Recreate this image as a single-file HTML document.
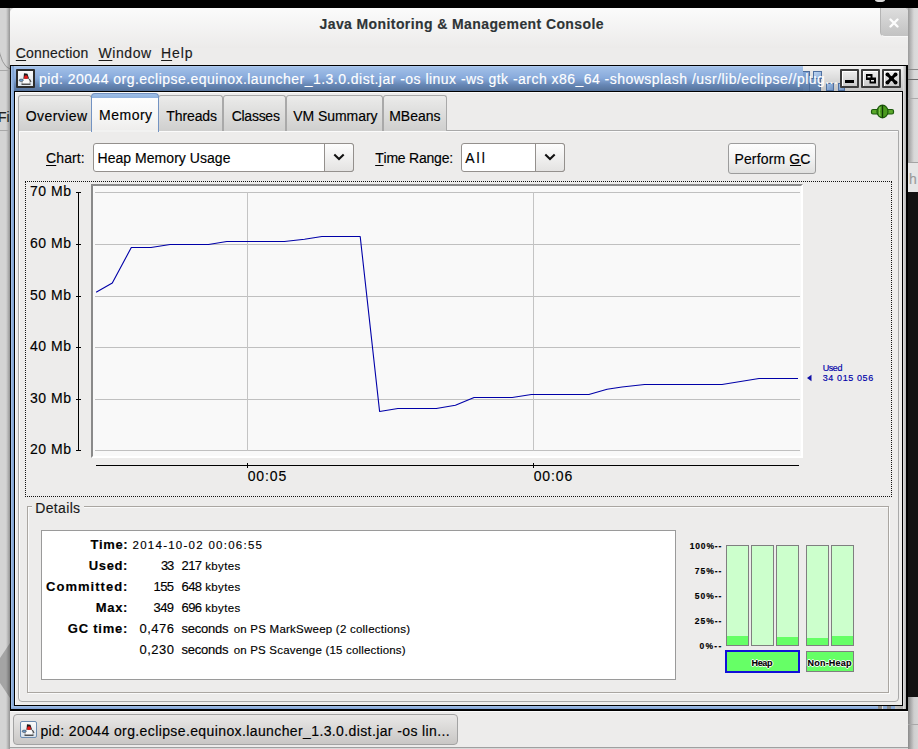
<!DOCTYPE html><html><head><meta charset="utf-8"><style>
html,body{margin:0;padding:0;width:918px;height:749px;overflow:hidden;background:#edeceb}
.r{position:absolute;box-sizing:border-box}
.t{position:absolute;white-space:nowrap;line-height:20px;font-family:"Liberation Sans",sans-serif;font-variant-ligatures:none;font-kerning:none;-webkit-text-stroke:0.15px currentColor}
u{text-decoration:underline;text-underline-offset:2px}
</style></head><body>
<div class="r" style="left:0px;top:0px;width:918px;height:749px;background:#edeceb"></div>
<div class="r" style="left:0px;top:0px;width:10px;height:749px;background:#d4d4d4"></div>
<svg class="r" style="left:0;top:0" width="10" height="749"><path d="M0 658 L10 643 L10 698 L0 683 Z" fill="#a4a4a4"/><path d="M-2 44 Q1 66 10 69" stroke="#9a9a9a" stroke-width="1" fill="none"/><rect x="0" y="0" width="10" height="749" fill="url(#lg)"/><defs><linearGradient id="lg" x1="0" x2="1" y1="0" y2="0"><stop offset="0" stop-color="#000" stop-opacity="0"/><stop offset="0.6" stop-color="#000" stop-opacity="0"/><stop offset="1" stop-color="#000" stop-opacity="0.3"/></linearGradient></defs></svg>
<div class="r" style="left:0px;top:0px;width:918px;height:8px;background:#000"></div>
<svg class="r" style="left:870px;top:0" width="20" height="4"><ellipse cx="10" cy="0" rx="5" ry="2" fill="#d8d8d8"/></svg>
<div class="r" style="left:908px;top:8px;width:10px;height:154px;background:linear-gradient(to right,#9a9a9a,#d8d8d8 60%,#dcdcdc)"></div>
<div class="r" style="left:908px;top:162px;width:10px;height:30px;background:#e6e6e6;border-top:1px solid #a4a4a4"></div>
<div class="r" style="left:908px;top:192px;width:10px;height:505px;background:#121212"></div>
<div class="r" style="left:908px;top:697px;width:10px;height:52px;background:linear-gradient(to right,#8a8a8a,#cfcfcf 60%,#d6d6d6)"></div>
<div class="r" style="left:908px;top:724px;width:10px;height:1px;background:#a8a8a8"></div>
<div class="r" style="left:908px;top:69px;width:10px;height:1px;background:#888"></div>
<div class="r" style="left:908px;top:79px;width:10px;height:1px;background:#6a6a6a"></div>
<div class="r" style="left:908px;top:98px;width:10px;height:1px;background:#aaa"></div>
<div class="r" style="left:10px;top:8px;width:6px;height:6px;background:#cfcfcf"></div>
<div class="r" style="left:902px;top:8px;width:6px;height:6px;background:#bdbdbd"></div>
<div class="r" style="left:10px;top:8px;width:898px;height:741px;background:#edeceb;border-radius:5px 5px 0 0"></div>
<div class="r" style="left:10px;top:8px;width:898px;height:40px;background:linear-gradient(to bottom,#fbfbfb,#ecebea);border-radius:5px 5px 0 0"></div>
<div class="r" style="left:880px;top:8px;width:28px;height:29px;background:linear-gradient(to bottom,#dedede,#c2c2c2);border-radius:0 4px 0 5px;border-left:1px solid #b4b4b4;border-bottom:1px solid #f8f8f8"></div>
<svg class="r" style="left:888px;top:17px" width="12" height="12"><path d="M2.5 2.5 L9.5 9.5 M9.5 2.5 L2.5 9.5" stroke="#fdfdfd" stroke-width="2.4" stroke-linecap="round"/></svg>
<div class="t" style="left:15.80px;top:43.15px;font-size:14px;letter-spacing:0.183px;font-weight:normal;color:#1a1a1a;"><u>C</u>onnection</div>
<div class="t" style="left:98.60px;top:43.15px;font-size:14px;letter-spacing:0.550px;font-weight:normal;color:#1a1a1a;"><u>W</u>indow</div>
<div class="t" style="left:161.10px;top:43.15px;font-size:14px;letter-spacing:0.900px;font-weight:normal;color:#1a1a1a;"><u>H</u>elp</div>
<div class="t" style="left:319.50px;top:14.15px;font-size:14px;letter-spacing:0.403px;font-weight:bold;color:#2e3436;">Java Monitoring &amp; Management Console</div>
<div class="r" style="left:10px;top:65px;width:898px;height:646px;background:#000"></div>
<div class="r" style="left:11px;top:66px;width:895px;height:25px;background:linear-gradient(to bottom,#bad2f2 0px,#a2c0e8 1px,#88aadb 12px,#6686b4 19px,#55729a 25px)"></div>
<div class="r" style="left:803px;top:66px;width:103px;height:25px;background:linear-gradient(to bottom,#f2f2f2,#dcdcdc 50%,#c4c4c4)"></div>
<div class="r" style="left:803px;top:71px;width:7px;height:20px;background:linear-gradient(to bottom,#86a8d8,#5b7aa3);box-shadow:inset -1px 1px 0 #4d6d9a"></div>
<div class="r" style="left:810px;top:78px;width:11px;height:13px;background:linear-gradient(to bottom,#7b9dcb,#5b7aa3);box-shadow:inset -1px 1px 0 #4d6d9a"></div>
<div class="r" style="left:813px;top:71px;width:9px;height:8px;background:linear-gradient(135deg,#c4daf4,#88aad8);box-shadow:inset 0 0 0 1px #4f70a0"></div>
<div class="r" style="left:826px;top:83px;width:8px;height:8px;background:linear-gradient(135deg,#a8c4e8,#6a8cbc);box-shadow:inset 0 0 0 1px #4f70a0"></div>
<div class="r" style="left:838px;top:83px;width:7px;height:8px;background:linear-gradient(135deg,#a8c4e8,#6a8cbc);box-shadow:inset 0 0 0 1px #4f70a0"></div>
<div class="r" style="left:11px;top:66px;width:3px;height:643px;background:linear-gradient(to right,#b4cdef,#8fb0dc 1px,#7fa2d2)"></div>
<div class="r" style="left:11px;top:706px;width:867px;height:3px;background:linear-gradient(to bottom,#a4c2ea,#7c9ed0)"></div>
<div class="r" style="left:878px;top:706px;width:28px;height:3px;background:linear-gradient(to right,#e6e6e6,#a8a8a8)"></div>
<div class="r" style="left:878px;top:706px;width:4px;height:3px;background:#8a8a8a"></div>
<div class="r" style="left:883px;top:706px;width:4px;height:3px;background:#8aaad6"></div>
<div class="r" style="left:887px;top:706px;width:4px;height:3px;background:#8a8a8a"></div>
<div class="r" style="left:891px;top:706px;width:4px;height:3px;background:#8aaad6"></div>
<div class="r" style="left:903px;top:66px;width:3px;height:643px;background:linear-gradient(to right,#e4e4e4,#b0b0b0)"></div>
<div class="r" style="left:15px;top:92px;width:887px;height:613px;background:#edeceb;border-left:1px solid #fafafa;border-top:1px solid #fafafa;box-sizing:border-box"></div>
<div class="t" style="left:38.90px;top:69.15px;font-size:14px;letter-spacing:0.470px;font-weight:normal;color:#fff;">pid: 20044 org.eclipse.equinox.launcher_1.3.0.dist.jar -os linux -ws gtk -arch x86_64 -showsplash /usr/lib/eclipse//plug...</div>
<div class="r" style="left:16px;top:69px;width:19px;height:19px;background:#2c2c2c;border-radius:1px"></div>
<div class="r" style="left:18px;top:71px;width:15px;height:15px;background:linear-gradient(#fafafa,#dde6ee)"></div>
<svg class="r" style="left:18px;top:71px" width="15" height="15"><path d="M5.5 7 Q3.5 11 4 13 L12 13 Q12.5 10 10.5 7 Z" fill="#fbfbfb" stroke="#777" stroke-width="0.6"/><path d="M6 2.2 L9.5 2.8 L11 7.5 L5.5 7.5 Z" fill="#1a1a1a"/><circle cx="8" cy="6.2" r="1.9" fill="#e41b1b"/><ellipse cx="3.2" cy="9.3" rx="2" ry="1.2" fill="#6d9ccc" stroke="#333" stroke-width="0.5"/><path d="M11.5 8 L13 11" stroke="#333" stroke-width="1"/><path d="M3.5 13.3 H12.5" stroke="#444" stroke-width="1.2"/></svg>
<div class="r" style="left:840px;top:69px;width:19px;height:19px;background:#3c3c3c;border-radius:1px"></div>
<div class="r" style="left:842px;top:71px;width:15px;height:15px;background:linear-gradient(#ececec,#c9c9c9);border-top:1px solid #fff;border-left:1px solid #fff;box-sizing:border-box"></div>
<svg class="r" style="left:840px;top:69px" width="19" height="19"><rect x="5" y="11" width="9" height="3" fill="#000"/></svg>
<div class="r" style="left:861px;top:69px;width:19px;height:19px;background:#3c3c3c;border-radius:1px"></div>
<div class="r" style="left:863px;top:71px;width:15px;height:15px;background:linear-gradient(#ececec,#c9c9c9);border-top:1px solid #fff;border-left:1px solid #fff;box-sizing:border-box"></div>
<svg class="r" style="left:861px;top:69px" width="19" height="19"><rect x="5" y="5" width="6.5" height="6" fill="#000"/><rect x="8.5" y="8.5" width="6.5" height="6" fill="#000"/><rect x="6.5" y="7" width="3" height="1.5" fill="#e8e8e8"/><rect x="10" y="11" width="3" height="1.5" fill="#e8e8e8"/></svg>
<div class="r" style="left:882px;top:69px;width:19px;height:19px;background:#3c3c3c;border-radius:1px"></div>
<div class="r" style="left:884px;top:71px;width:15px;height:15px;background:linear-gradient(#ececec,#c9c9c9);border-top:1px solid #fff;border-left:1px solid #fff;box-sizing:border-box"></div>
<svg class="r" style="left:882px;top:69px" width="19" height="19"><path d="M5.5 5.5 L13.5 13.5 M13.5 5.5 L5.5 13.5" stroke="#000" stroke-width="3"/><circle cx="5.5" cy="5.5" r="2"/><circle cx="13.5" cy="5.5" r="2"/><circle cx="5.5" cy="13.5" r="2"/><circle cx="13.5" cy="13.5" r="2"/><circle cx="9.5" cy="9.5" r="2.3"/></svg>
<div class="r" style="left:18px;top:130px;width:881px;height:572px;border:1px solid #a9a9a9;border-radius:0 0 4px 4px;box-sizing:border-box;box-shadow:inset 1px 1px 0 #fbfbfb"></div>
<div class="r" style="left:18px;top:95px;width:74px;height:36px;background:linear-gradient(#ebebea,#cfcfce);border:1px solid #a9a9a9;border-bottom:none;border-radius:3px 3px 0 0;box-sizing:border-box"></div>
<div class="r" style="left:158px;top:95px;width:65px;height:36px;background:linear-gradient(#ebebea,#cfcfce);border:1px solid #a9a9a9;border-bottom:none;border-radius:3px 3px 0 0;box-sizing:border-box"></div>
<div class="r" style="left:223px;top:95px;width:63px;height:36px;background:linear-gradient(#ebebea,#cfcfce);border:1px solid #a9a9a9;border-bottom:none;border-radius:3px 3px 0 0;box-sizing:border-box"></div>
<div class="r" style="left:286px;top:95px;width:97px;height:36px;background:linear-gradient(#ebebea,#cfcfce);border:1px solid #a9a9a9;border-bottom:none;border-radius:3px 3px 0 0;box-sizing:border-box"></div>
<div class="r" style="left:383px;top:95px;width:64px;height:36px;background:linear-gradient(#ebebea,#cfcfce);border:1px solid #a9a9a9;border-bottom:none;border-radius:3px 3px 0 0;box-sizing:border-box"></div>
<div class="r" style="left:91px;top:93px;width:68px;height:39px;background:linear-gradient(#9fbfe7 0px,#8fb1de 4px,#fdfdfd 4px,#f6f6f5 60%,#edeceb);border:1px solid #7393c2;border-bottom:none;border-radius:4px 4px 0 0;box-sizing:border-box"></div>
<div class="r" style="left:92px;top:130px;width:66px;height:2px;background:#f2f2f1"></div>
<div class="t" style="left:25.70px;top:105.65px;font-size:14px;letter-spacing:0.429px;font-weight:normal;color:#000;">Overview</div>
<div class="t" style="left:99.00px;top:104.65px;font-size:14px;letter-spacing:0.510px;font-weight:normal;color:#000;">Memory</div>
<div class="t" style="left:166.30px;top:105.65px;font-size:14px;letter-spacing:-0.108px;font-weight:normal;color:#000;">Threads</div>
<div class="t" style="left:231.70px;top:105.65px;font-size:14px;letter-spacing:-0.267px;font-weight:normal;color:#000;">Classes</div>
<div class="t" style="left:293.30px;top:106.15px;font-size:14px;letter-spacing:-0.067px;font-weight:normal;color:#000;">VM Summary</div>
<div class="t" style="left:389.20px;top:106.15px;font-size:14px;letter-spacing:-0.030px;font-weight:normal;color:#000;">MBeans</div>
<svg class="r" style="left:868px;top:102px" width="30" height="20"><rect x="3.5" y="7.5" width="22" height="4.5" rx="1.5" fill="#5aa82a" stroke="#1d5a0c" stroke-width="1.2"/><ellipse cx="14.5" cy="9.5" rx="5.5" ry="6.3" fill="#4a9a1e" stroke="#1d5a0c" stroke-width="1.2"/><path d="M14.5 3.2 V15.8" stroke="#0f3a06" stroke-width="1.3"/><path d="M12 5 Q11 9.5 12 14" stroke="#8fd060" stroke-width="1" fill="none"/></svg>
<div class="t" style="left:46.00px;top:148.15px;font-size:14px;letter-spacing:0.120px;font-weight:normal;color:#000;"><u>C</u>hart:</div>
<div class="r" style="left:93px;top:143px;width:261px;height:29px;background:#fff;border:1px solid #94908d;border-radius:3px;box-sizing:border-box"></div>
<div class="r" style="left:324px;top:143px;width:30px;height:29px;background:linear-gradient(#fdfdfd,#e4e3e2);border:1px solid #94908d;border-radius:0 3px 3px 0;box-sizing:border-box"></div>
<svg class="r" style="left:333.0px;top:151px" width="12" height="12"><path d="M1.3 3.6 L6 8 L10.7 3.6" stroke="#111" stroke-width="2.1" fill="none"/></svg>
<div class="t" style="left:97.50px;top:148.15px;font-size:14px;letter-spacing:0.044px;font-weight:normal;color:#000;">Heap Memory Usage</div>
<div class="t" style="left:375.20px;top:148.15px;font-size:14px;letter-spacing:-0.220px;font-weight:normal;color:#000;"><u>T</u>ime Range:</div>
<div class="r" style="left:461px;top:143px;width:104px;height:29px;background:#fff;border:1px solid #94908d;border-radius:3px;box-sizing:border-box"></div>
<div class="r" style="left:535px;top:143px;width:30px;height:29px;background:linear-gradient(#fdfdfd,#e4e3e2);border:1px solid #94908d;border-radius:0 3px 3px 0;box-sizing:border-box"></div>
<svg class="r" style="left:544.0px;top:151px" width="12" height="12"><path d="M1.3 3.6 L6 8 L10.7 3.6" stroke="#111" stroke-width="2.1" fill="none"/></svg>
<div class="t" style="left:465.30px;top:148.15px;font-size:14px;letter-spacing:1.975px;font-weight:normal;color:#000;">All</div>
<div class="r" style="left:728px;top:143px;width:88px;height:31px;background:linear-gradient(#fdfdfd 0%,#f4f4f4 45%,#e0e0df 100%);border:1px solid #9c9c9c;border-radius:3px;box-sizing:border-box"></div>
<div class="t" style="left:734.40px;top:149.15px;font-size:14px;letter-spacing:0.156px;font-weight:normal;color:#000;">Perform GC</div>
<div class="r" style="left:790px;top:165px;width:11px;height:1px;background:#000"></div>
<div class="r" style="left:25px;top:181px;width:867px;height:316px;border:1px dotted #111;box-sizing:border-box"></div>
<div class="t" style="left:30.00px;top:181.15px;font-size:14px;letter-spacing:0.525px;font-weight:normal;color:#000;">70 Mb</div>
<div class="t" style="left:30.00px;top:233.15px;font-size:14px;letter-spacing:0.525px;font-weight:normal;color:#000;">60 Mb</div>
<div class="t" style="left:30.00px;top:285.15px;font-size:14px;letter-spacing:0.525px;font-weight:normal;color:#000;">50 Mb</div>
<div class="t" style="left:30.00px;top:336.15px;font-size:14px;letter-spacing:0.525px;font-weight:normal;color:#000;">40 Mb</div>
<div class="t" style="left:30.00px;top:388.15px;font-size:14px;letter-spacing:0.525px;font-weight:normal;color:#000;">30 Mb</div>
<div class="t" style="left:30.00px;top:439.15px;font-size:14px;letter-spacing:0.525px;font-weight:normal;color:#000;">20 Mb</div>
<div class="r" style="left:78px;top:192px;width:1px;height:259px;background:#000"></div>
<div class="r" style="left:76px;top:192px;width:5px;height:1px;background:#000"></div>
<div class="r" style="left:76px;top:244px;width:5px;height:1px;background:#000"></div>
<div class="r" style="left:76px;top:296px;width:5px;height:1px;background:#000"></div>
<div class="r" style="left:76px;top:347px;width:5px;height:1px;background:#000"></div>
<div class="r" style="left:76px;top:399px;width:5px;height:1px;background:#000"></div>
<div class="r" style="left:76px;top:450px;width:5px;height:1px;background:#000"></div>
<div class="r" style="left:91px;top:184px;width:712px;height:274px;background:#f9f9f9;border-left:2px solid #8a8a8a;border-top:2px solid #8a8a8a;border-right:2px solid #fff;border-bottom:2px solid #fff;box-sizing:border-box"></div>
<svg class="r" style="left:0;top:0" width="918" height="749"><path d="M95 192.5 H800" stroke="#c0c0c0" stroke-width="1"/><path d="M95 244.5 H800" stroke="#c0c0c0" stroke-width="1"/><path d="M95 296.5 H800" stroke="#c0c0c0" stroke-width="1"/><path d="M95 347.5 H800" stroke="#c0c0c0" stroke-width="1"/><path d="M95 399.5 H800" stroke="#c0c0c0" stroke-width="1"/><path d="M95 450.5 H800" stroke="#c0c0c0" stroke-width="1"/><path d="M247.5 192 V451" stroke="#c4c4c4" stroke-width="1"/><path d="M533.5 192 V451" stroke="#c4c4c4" stroke-width="1"/><path d="M96.1 292.3 L112.3 283.1 L131.3 247.5 L151.0 247.5 L170.1 244.5 L208.5 244.5 L226.8 241.5 L284.4 241.5 L304.5 239.2 L321.9 236.5 L360.2 236.5 L379.6 411.5 L397.9 408.5 L436.3 408.5 L455.4 405.2 L474.1 397.5 L512.2 397.5 L531.4 394.5 L588.9 394.5 L607.1 389.2 L622.0 387.0 L644.6 384.5 L722.0 384.5 L759.0 378.5 L798.0 378.5" stroke="#0000a8" stroke-width="1.1" fill="none" stroke-linejoin="round"/><path d="M96 465.5 H799" stroke="#000" stroke-width="1.2"/><path d="M247.5 463 V468 M533.5 463 V468" stroke="#000" stroke-width="1"/><path d="M807 378 L811.5 374.8 V381.2 Z" fill="#1010a8"/></svg>
<div class="t" style="left:247.70px;top:466.15px;font-size:14px;letter-spacing:0.863px;font-weight:normal;color:#000;">00:05</div>
<div class="t" style="left:533.70px;top:466.15px;font-size:14px;letter-spacing:0.863px;font-weight:normal;color:#000;">00:06</div>
<div class="t" style="left:822.70px;top:357.88px;font-size:9px;letter-spacing:-0.433px;font-weight:normal;color:#0000a8;">Used</div>
<div class="t" style="left:822.70px;top:368.08px;font-size:9px;letter-spacing:0.606px;font-weight:normal;color:#0000a8;">34 015 056</div>
<div class="r" style="left:27px;top:506px;width:862px;height:187px;border:1px solid #aaa6a1;box-sizing:border-box;box-shadow:1px 1px 0 #fafafa, inset 1px 1px 0 #fafafa"></div>
<div class="r" style="left:32px;top:502px;width:52px;height:10px;background:#edeceb"></div>
<div class="t" style="left:35.30px;top:498.15px;font-size:14px;letter-spacing:0.333px;font-weight:normal;color:#1a1a1a;">Details</div>
<div class="r" style="left:41px;top:530px;width:635px;height:150px;background:#fff;border:1px solid #9a9a9a;box-sizing:border-box"></div>
<div class="t" style="left:90.60px;top:534.50px;font-size:13px;letter-spacing:0.588px;font-weight:bold;color:#000;">Time:</div>
<div class="t" style="left:88.80px;top:555.50px;font-size:13px;letter-spacing:0.625px;font-weight:bold;color:#000;">Used:</div>
<div class="t" style="left:46.10px;top:576.50px;font-size:13px;letter-spacing:1.011px;font-weight:bold;color:#000;">Committed:</div>
<div class="t" style="left:95.70px;top:597.50px;font-size:13px;letter-spacing:0.700px;font-weight:bold;color:#000;">Max:</div>
<div class="t" style="left:67.80px;top:618.50px;font-size:13px;letter-spacing:0.779px;font-weight:bold;color:#000;">GC time:</div>
<div class="t" style="left:132.50px;top:535.02px;font-size:11.5px;letter-spacing:1.261px;font-weight:normal;color:#000;">2014-10-02 00:06:55</div>
<div class="t" style="left:161.00px;top:555.50px;font-size:13px;letter-spacing:-1.350px;font-weight:normal;color:#000;">33</div>
<div class="t" style="left:181.50px;top:555.50px;font-size:13px;letter-spacing:-0.550px;font-weight:normal;color:#000;">217</div>
<div class="t" style="left:205.20px;top:556.02px;font-size:11.5px;letter-spacing:0.350px;font-weight:normal;color:#000;">kbytes</div>
<div class="t" style="left:153.50px;top:576.50px;font-size:13px;letter-spacing:-0.550px;font-weight:normal;color:#000;">155</div>
<div class="t" style="left:181.50px;top:576.50px;font-size:13px;letter-spacing:-0.550px;font-weight:normal;color:#000;">648</div>
<div class="t" style="left:205.20px;top:577.02px;font-size:11.5px;letter-spacing:0.350px;font-weight:normal;color:#000;">kbytes</div>
<div class="t" style="left:153.50px;top:597.50px;font-size:13px;letter-spacing:-0.550px;font-weight:normal;color:#000;">349</div>
<div class="t" style="left:181.50px;top:597.50px;font-size:13px;letter-spacing:-0.550px;font-weight:normal;color:#000;">696</div>
<div class="t" style="left:205.20px;top:598.02px;font-size:11.5px;letter-spacing:0.350px;font-weight:normal;color:#000;">kbytes</div>
<div class="t" style="left:139.40px;top:618.50px;font-size:13px;letter-spacing:0.538px;font-weight:normal;color:#000;">0,476</div>
<div class="t" style="left:181.60px;top:618.50px;font-size:13px;letter-spacing:-0.233px;font-weight:normal;color:#000;">seconds</div>
<div class="t" style="left:233.70px;top:619.02px;font-size:11.5px;letter-spacing:0.233px;font-weight:normal;color:#000;">on PS MarkSweep (2 collections)</div>
<div class="t" style="left:139.40px;top:639.50px;font-size:13px;letter-spacing:0.538px;font-weight:normal;color:#000;">0,230</div>
<div class="t" style="left:181.60px;top:639.50px;font-size:13px;letter-spacing:-0.233px;font-weight:normal;color:#000;">seconds</div>
<div class="t" style="left:233.70px;top:640.02px;font-size:11.5px;letter-spacing:0.190px;font-weight:normal;color:#000;">on PS Scavenge (15 collections)</div>
<div class="t" style="left:689.70px;top:536.05px;font-size:8.5px;letter-spacing:0.840px;font-weight:bold;color:#000;">100%--</div>
<div class="t" style="left:694.80px;top:561.05px;font-size:8.5px;letter-spacing:0.963px;font-weight:bold;color:#000;">75%--</div>
<div class="t" style="left:694.80px;top:586.05px;font-size:8.5px;letter-spacing:0.963px;font-weight:bold;color:#000;">50%--</div>
<div class="t" style="left:694.80px;top:611.05px;font-size:8.5px;letter-spacing:0.963px;font-weight:bold;color:#000;">25%--</div>
<div class="t" style="left:699.40px;top:636.05px;font-size:8.5px;letter-spacing:1.317px;font-weight:bold;color:#000;">0%--</div>
<div class="r" style="left:726px;top:545px;width:23px;height:101px;background:#ccffcc;border:1px solid #7f7f7f;box-sizing:border-box"></div>
<div class="r" style="left:727px;top:636px;width:21px;height:9px;background:#66ff66"></div>
<div class="r" style="left:751px;top:545px;width:23px;height:101px;background:#ccffcc;border:1px solid #7f7f7f;box-sizing:border-box"></div>
<div class="r" style="left:776px;top:545px;width:23px;height:101px;background:#ccffcc;border:1px solid #7f7f7f;box-sizing:border-box"></div>
<div class="r" style="left:777px;top:637px;width:21px;height:8px;background:#66ff66"></div>
<div class="r" style="left:806px;top:545px;width:23px;height:101px;background:#ccffcc;border:1px solid #7f7f7f;box-sizing:border-box"></div>
<div class="r" style="left:807px;top:638px;width:21px;height:7px;background:#66ff66"></div>
<div class="r" style="left:831px;top:545px;width:23px;height:101px;background:#ccffcc;border:1px solid #7f7f7f;box-sizing:border-box"></div>
<div class="r" style="left:832px;top:636px;width:21px;height:9px;background:#66ff66"></div>
<div class="r" style="left:725px;top:650px;width:75px;height:23px;background:#66ff66;border:2px solid #1010d8;box-sizing:border-box"></div>
<div class="r" style="left:806px;top:651px;width:48px;height:21px;background:#66ff66;border:1px solid #7f7f7f;box-sizing:border-box"></div>
<div class="t" style="left:751.50px;top:652.88px;font-size:9px;letter-spacing:-0.333px;font-weight:bold;color:#000;text-shadow:1px 0 0 #fff,-1px 0 0 #fff,0 1px 0 #fff,0 -1px 0 #fff">Heap</div>
<div class="t" style="left:807.50px;top:652.88px;font-size:9px;letter-spacing:0.214px;font-weight:bold;color:#000;text-shadow:1px 0 0 #fff,-1px 0 0 #fff,0 1px 0 #fff,0 -1px 0 #fff">Non-Heap</div>
<div class="r" style="left:10px;top:711px;width:898px;height:1px;background:#fbfbfb"></div>
<div class="r" style="left:13px;top:714px;width:445px;height:31px;background:linear-gradient(#e9e8e7,#c9c7c5);border:1px solid #a3a3a3;border-radius:4px;box-sizing:border-box"></div>
<div class="r" style="left:20px;top:721px;width:17px;height:17px;background:linear-gradient(#fafafa,#d8e2ec);border:1px solid #6c8cb0;border-radius:2px;box-sizing:border-box"></div>
<svg class="r" style="left:21px;top:722px" width="15" height="15"><path d="M5.5 7 Q3.5 11 4 13 L12 13 Q12.5 10 10.5 7 Z" fill="#fbfbfb" stroke="#777" stroke-width="0.6"/><path d="M6 2.2 L9.5 2.8 L11 7.5 L5.5 7.5 Z" fill="#1a1a1a"/><circle cx="8" cy="6.2" r="1.9" fill="#e41b1b"/><ellipse cx="3.2" cy="9.3" rx="2" ry="1.2" fill="#6d9ccc" stroke="#333" stroke-width="0.5"/><path d="M11.5 8 L13 11" stroke="#333" stroke-width="1"/><path d="M3.5 13.3 H12.5" stroke="#444" stroke-width="1.2"/></svg>
<div class="t" style="left:40.40px;top:721.15px;font-size:14px;letter-spacing:0.388px;font-weight:normal;color:#000;">pid: 20044 org.eclipse.equinox.launcher_1.3.0.dist.jar -os lin...</div>
<div class="r" style="left:10px;top:747px;width:898px;height:1px;background:#a0a0a0"></div>
<div class="r" style="left:10px;top:748px;width:898px;height:1px;background:#d8d8d8"></div>
<div class="t" style="left:-2.00px;top:107.15px;font-size:14px;letter-spacing:0.000px;font-weight:normal;color:#222;">Fi</div>
<div class="r" style="left:0px;top:70px;width:9px;height:1px;background:#a8a8a8"></div>
<div class="r" style="left:0px;top:130px;width:9px;height:1px;background:#a8a8a8"></div>
<div class="t" style="left:909.00px;top:169.15px;font-size:14px;letter-spacing:1.100px;font-weight:normal;color:#9a9a9a;">hi</div>
</body></html>
